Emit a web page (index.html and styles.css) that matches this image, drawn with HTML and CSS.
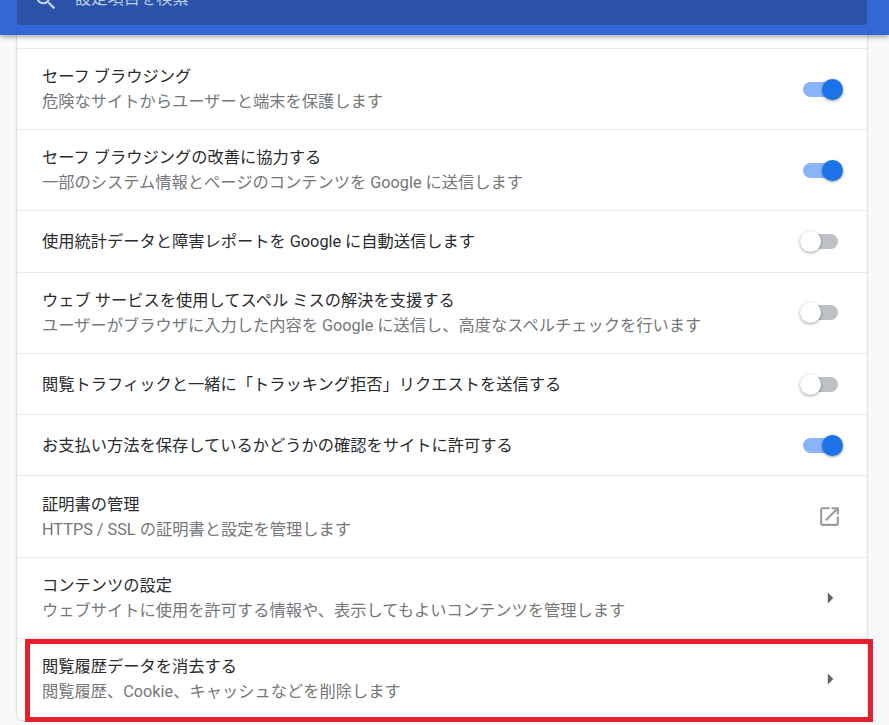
FILE: index.html
```html
<!DOCTYPE html>
<html lang="ja">
<head>
<meta charset="utf-8">
<title>設定</title>
<link rel="stylesheet" href="styles.css">
</head>
<body>
<header class="header">
  <div class="search">
    <svg class="search-icon" viewBox="0 0 24 24"><path d="M15.5 14h-.79l-.28-.27A6.47 6.47 0 0 0 16 9.5 6.5 6.5 0 1 0 9.5 16c1.61 0 3.09-.59 4.23-1.57l.27.28v.79l5 4.99L20.49 19l-4.99-5zm-6 0C7.01 14 5 11.99 5 9.5S7.01 5 9.5 5 14 7.01 14 9.5 11.99 14 9.5 14z"/></svg>
    <span class="search-text">設定項目を検索</span>
  </div>
</header>
<main class="card">
  <div class="row row-first"></div>
  <div class="row row-two">
    <div class="label"><div class="title">セーフ ブラウジング</div><div class="sub">危険なサイトからユーザーと端末を保護します</div></div>
    <div class="toggle on"><span class="knob"></span></div>
  </div>
  <div class="row row-two">
    <div class="label"><div class="title">セーフ ブラウジングの改善に協力する</div><div class="sub">一部のシステム情報とページのコンテンツを Google に送信します</div></div>
    <div class="toggle on"><span class="knob"></span></div>
  </div>
  <div class="row row-one">
    <div class="label"><div class="title">使用統計データと障害レポートを Google に自動送信します</div></div>
    <div class="toggle"><span class="knob"></span></div>
  </div>
  <div class="row row-two">
    <div class="label"><div class="title">ウェブ サービスを使用してスペル ミスの解決を支援する</div><div class="sub">ユーザーがブラウザに入力した内容を Google に送信し、高度なスペルチェックを行います</div></div>
    <div class="toggle"><span class="knob"></span></div>
  </div>
  <div class="row row-one">
    <div class="label"><div class="title">閲覧トラフィックと一緒に「トラッキング拒否」リクエストを送信する</div></div>
    <div class="toggle"><span class="knob"></span></div>
  </div>
  <div class="row row-one">
    <div class="label"><div class="title">お支払い方法を保存しているかどうかの確認をサイトに許可する</div></div>
    <div class="toggle on"><span class="knob"></span></div>
  </div>
  <div class="row row-two">
    <div class="label"><div class="title">証明書の管理</div><div class="sub">HTTPS / SSL の証明書と設定を管理します</div></div>
    <svg class="icon-open" viewBox="0 0 24 24"><path d="M19 19H5V5h7V3H5a2 2 0 0 0-2 2v14a2 2 0 0 0 2 2h14c1.1 0 2-.9 2-2v-7h-2v7zM14 3v2h3.59l-9.83 9.83 1.41 1.41L19 6.41V10h2V3h-7z"/></svg>
  </div>
  <div class="row row-two">
    <div class="label"><div class="title">コンテンツの設定</div><div class="sub">ウェブサイトに使用を許可する情報や、表示してもよいコンテンツを管理します</div></div>
    <svg class="icon-arrow" viewBox="0 0 24 24"><path d="M10 7l5 5-5 5z"/></svg>
  </div>
  <div class="row row-two">
    <div class="label"><div class="title">閲覧履歴データを消去する</div><div class="sub">閲覧履歴、Cookie、キャッシュなどを削除します</div></div>
    <svg class="icon-arrow" viewBox="0 0 24 24"><path d="M10 7l5 5-5 5z"/></svg>
  </div>
</main>
<div class="highlight"></div>
</body>
</html>
```
FILE: styles.css
```css
* { box-sizing: border-box; }
html, body { margin: 0; padding: 0; }
body {
  position: relative;
  width: 889px;
  height: 725px;
  overflow: hidden;
  background: #f8f9fa;
  font-family: Roboto, "Noto Sans CJK JP", sans-serif;
  font-size: 16.25px;
}
.header {
  position: relative;
  z-index: 2;
  height: 35px;
  padding: 0 22px 10px 17px;
  display: flex;
  align-items: flex-end;
  background: #3367d6;
  box-shadow: 0 2px 5px rgba(0, 0, 0, 0.35);
}
.search {
  flex: 1;
  height: 25px;
  display: flex;
  align-items: flex-end;
  padding-left: 16px;
  overflow: hidden;
  background: #2a52a8;
  border-radius: 0 0 3px 3px;
}
.search-icon {
  flex: none;
  width: 26px;
  height: 26px;
  margin-bottom: 12px;
  fill: #c6d2ea;
}
.search-text {
  color: #bccbe6;
  line-height: 20px;
  margin-bottom: 16px;
  margin-left: 16px;
  white-space: nowrap;
}
.card {
  margin: 0 22px 0 17px;
  height: 684.5px;
  background: #fff;
  border-radius: 0 0 4px 4px;
  box-shadow: 0 0 2px rgba(60, 64, 67, 0.45);
}
.row {
  display: flex;
  align-items: center;
  justify-content: space-between;
  padding: 0 29px 0 25px;
  border-top: 1px solid #e8eaed;
}
.row-first { height: 12.9px; border-top: 0; }
.row-two { height: 81.25px; }
.row-one { height: 61.25px; }
.label { padding-top: 1px; }
.title {
  color: #2a2b2e;
  line-height: 24px;
}
.sub {
  color: #74777b;
  line-height: 25px;
}
.toggle {
  position: relative;
  flex: none;
  width: 35px;
  height: 15px;
  border-radius: 8px;
  background: #bdc1c6;
}
.knob {
  position: absolute;
  top: -3px;
  left: -3px;
  width: 21px;
  height: 21px;
  border-radius: 50%;
  background: #fff;
  box-shadow: 0 1px 3px rgba(0, 0, 0, 0.4);
}
.toggle.on { background: #8ab4f8; }
.toggle.on .knob {
  left: 19px;
  background: #1a73e8;
}
.icon-open {
  flex: none;
  width: 25px;
  height: 25px;
  margin-right: -4px;
  fill: #9a9ca0;
}
.icon-arrow {
  flex: none;
  width: 26px;
  height: 26px;
  margin-right: -5px;
  fill: #5f6368;
}
.highlight {
  position: absolute;
  left: 25px;
  top: 639px;
  width: 848px;
  height: 83px;
  border: 5px solid #e8202e;
}
```
